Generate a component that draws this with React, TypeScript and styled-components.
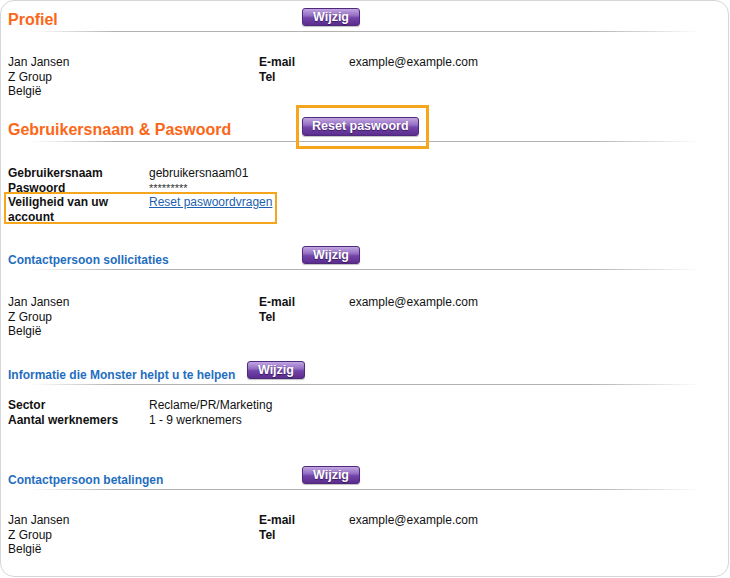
import React from "react";
import styled, { createGlobalStyle } from "styled-components";

const GlobalStyle = createGlobalStyle`
  html, body { margin: 0; padding: 0; background: #fff; }
  body {
    font-family: "Liberation Sans", Arial, sans-serif;
    font-size: 12px;
    color: #111;
  }
`;

const Panel = styled.div`
  width: 729px;
  box-sizing: border-box;
  border: 1px solid #d6d6d6;
  border-radius: 14px;
  background: #fff;
  padding-bottom: 19.5px;
`;

const Section = styled.section<{ $gap: number }>`
  margin-top: ${(p) => p.$gap}px;
`;

const Header = styled.div`
  display: flex;
  align-items: flex-end;
  padding: 7px 0 4px 7px;
  background: linear-gradient(
      to right,
      rgba(176, 176, 176, 0) 30px,
      #b2b2b2 115px,
      #b2b2b2 590px,
      rgba(176, 176, 176, 0) 700px
    )
    left bottom / 100% 1px no-repeat;
`;

const Title = styled.h2<{ $kind: "main" | "sub"; $inline?: boolean }>`
  margin: 0;
  font-weight: bold;
  flex: 0 0 auto;
  ${(p) =>
    p.$kind === "main"
      ? `font-size: 16px; line-height: 17px; color: #fb6718;`
      : `font-size: 12px; line-height: 12px; color: #1f6ebf;`}
  ${(p) => (p.$inline ? `margin-right: 11.6px;` : `width: 294px;`)}
`;

const Button = styled.button<{ $tall?: boolean }>`
  box-sizing: border-box;
  height: ${(p) => (p.$tall ? 19 : 18)}px;
  margin: 0 0 2px 0;
  padding: 0 ${(p) => (p.$tall ? 9 : 10)}px;
  border: 1px solid #4f2a7c;
  border-radius: 3px;
  background: linear-gradient(
    to bottom,
    #c2a6e0 0%,
    #9670c5 40%,
    #7345aa 55%,
    #5b2d8e 100%
  );
  color: #fff;
  font-family: "Liberation Sans", Arial, sans-serif;
  font-weight: bold;
  font-size: 12.5px;
  line-height: 1;
  text-shadow: 0 1px 1px rgba(40, 10, 70, 0.7);
  box-shadow: 0 1px 1px rgba(0, 0, 0, 0.25);
  cursor: pointer;
`;

const Highlight = styled.span`
  position: relative;
  display: inline-flex;
  margin-bottom: 2px;
  &::after {
    content: "";
    position: absolute;
    inset: -12px -10px -13px -6px;
    border: 3px solid #f5a61d;
    pointer-events: none;
  }
  & > button { margin: 0; }
`;

const Body = styled.div<{ $pt: number }>`
  padding: ${(p) => p.$pt}px 0 0 7px;
  line-height: 14.5px;
`;

const ContactGrid = styled.div`
  display: grid;
  grid-template-columns: 251px 90px auto;
`;

const Cell = styled.div<{ $bold?: boolean }>`
  font-weight: ${(p) => (p.$bold ? "bold" : "normal")};
  white-space: nowrap;
`;

const KVList = styled.div`
  display: flex;
  flex-direction: column;
`;

const KVRow = styled.div<{ $marked?: boolean }>`
  display: flex;
  ${(p) =>
    p.$marked
      ? `
    position: relative;
    width: fit-content;
    &::after {
      content: "";
      position: absolute;
      inset: -3px -5px 0 -4px;
      border: 2px solid #f5a61d;
      pointer-events: none;
    }
  `
      : ""}
`;

const Key = styled.div`
  width: 141px;
  flex: 0 0 141px;
  font-weight: bold;
`;

const Value = styled.div`
  white-space: nowrap;
`;

const Stars = styled.span`
  font-size: 11px;
  color: #333;
`;

const Link = styled.a`
  color: #1d5fb0;
  text-decoration: underline;
`;

type Contact = { name: string; company: string; country: string; email: string };

const contact: Contact = {
  name: "Jan Jansen",
  company: "Z Group",
  country: "België",
  email: "example@example.com",
};

const ContactBlock: React.FC<{ c: Contact; pt: number }> = ({ c, pt }) => (
  <Body $pt={pt}>
    <ContactGrid>
      <Cell>{c.name}</Cell>
      <Cell $bold>E-mail</Cell>
      <Cell>{c.email}</Cell>
      <Cell>{c.company}</Cell>
      <Cell $bold>Tel</Cell>
      <Cell />
      <Cell>{c.country}</Cell>
      <Cell />
      <Cell />
    </ContactGrid>
  </Body>
);

export default function App() {
  return (
    <>
      <GlobalStyle />
      <Panel>
        <Section $gap={0}>
          <Header>
            <Title $kind="main">Profiel</Title>
            <Button>Wijzig</Button>
          </Header>
          <ContactBlock c={contact} pt={23} />
        </Section>

        <Section $gap={11.5}>
          <Header>
            <Title $kind="main">Gebruikersnaam &amp; Paswoord</Title>
            <Highlight>
              <Button $tall>Reset paswoord</Button>
            </Highlight>
          </Header>
          <Body $pt={24}>
            <KVList>
              <KVRow>
                <Key>Gebruikersnaam</Key>
                <Value>gebruikersnaam01</Value>
              </KVRow>
              <KVRow>
                <Key>Paswoord</Key>
                <Value>
                  <Stars>*********</Stars>
                </Value>
              </KVRow>
              <KVRow $marked>
                <Key>Veiligheid van uw account</Key>
                <Value>
                  <Link href="#">Reset paswoordvragen</Link>
                </Value>
              </KVRow>
            </KVList>
          </Body>
        </Section>

        <Section $gap={15}>
          <Header>
            <Title $kind="sub">Contactpersoon sollicitaties</Title>
            <Button>Wijzig</Button>
          </Header>
          <ContactBlock c={contact} pt={25} />
        </Section>

        <Section $gap={15.5}>
          <Header>
            <Title $kind="sub" $inline>
              Informatie die Monster helpt u te helpen
            </Title>
            <Button>Wijzig</Button>
          </Header>
          <Body $pt={13}>
            <KVList>
              <KVRow>
                <Key>Sector</Key>
                <Value>Reclame/PR/Marketing</Value>
              </KVRow>
              <KVRow>
                <Key>Aantal werknemers</Key>
                <Value>1 - 9 werknemers</Value>
              </KVRow>
            </KVList>
          </Body>
        </Section>

        <Section $gap={32}>
          <Header>
            <Title $kind="sub">Contactpersoon betalingen</Title>
            <Button>Wijzig</Button>
          </Header>
          <ContactBlock c={contact} pt={23} />
        </Section>
      </Panel>
    </>
  );
}
